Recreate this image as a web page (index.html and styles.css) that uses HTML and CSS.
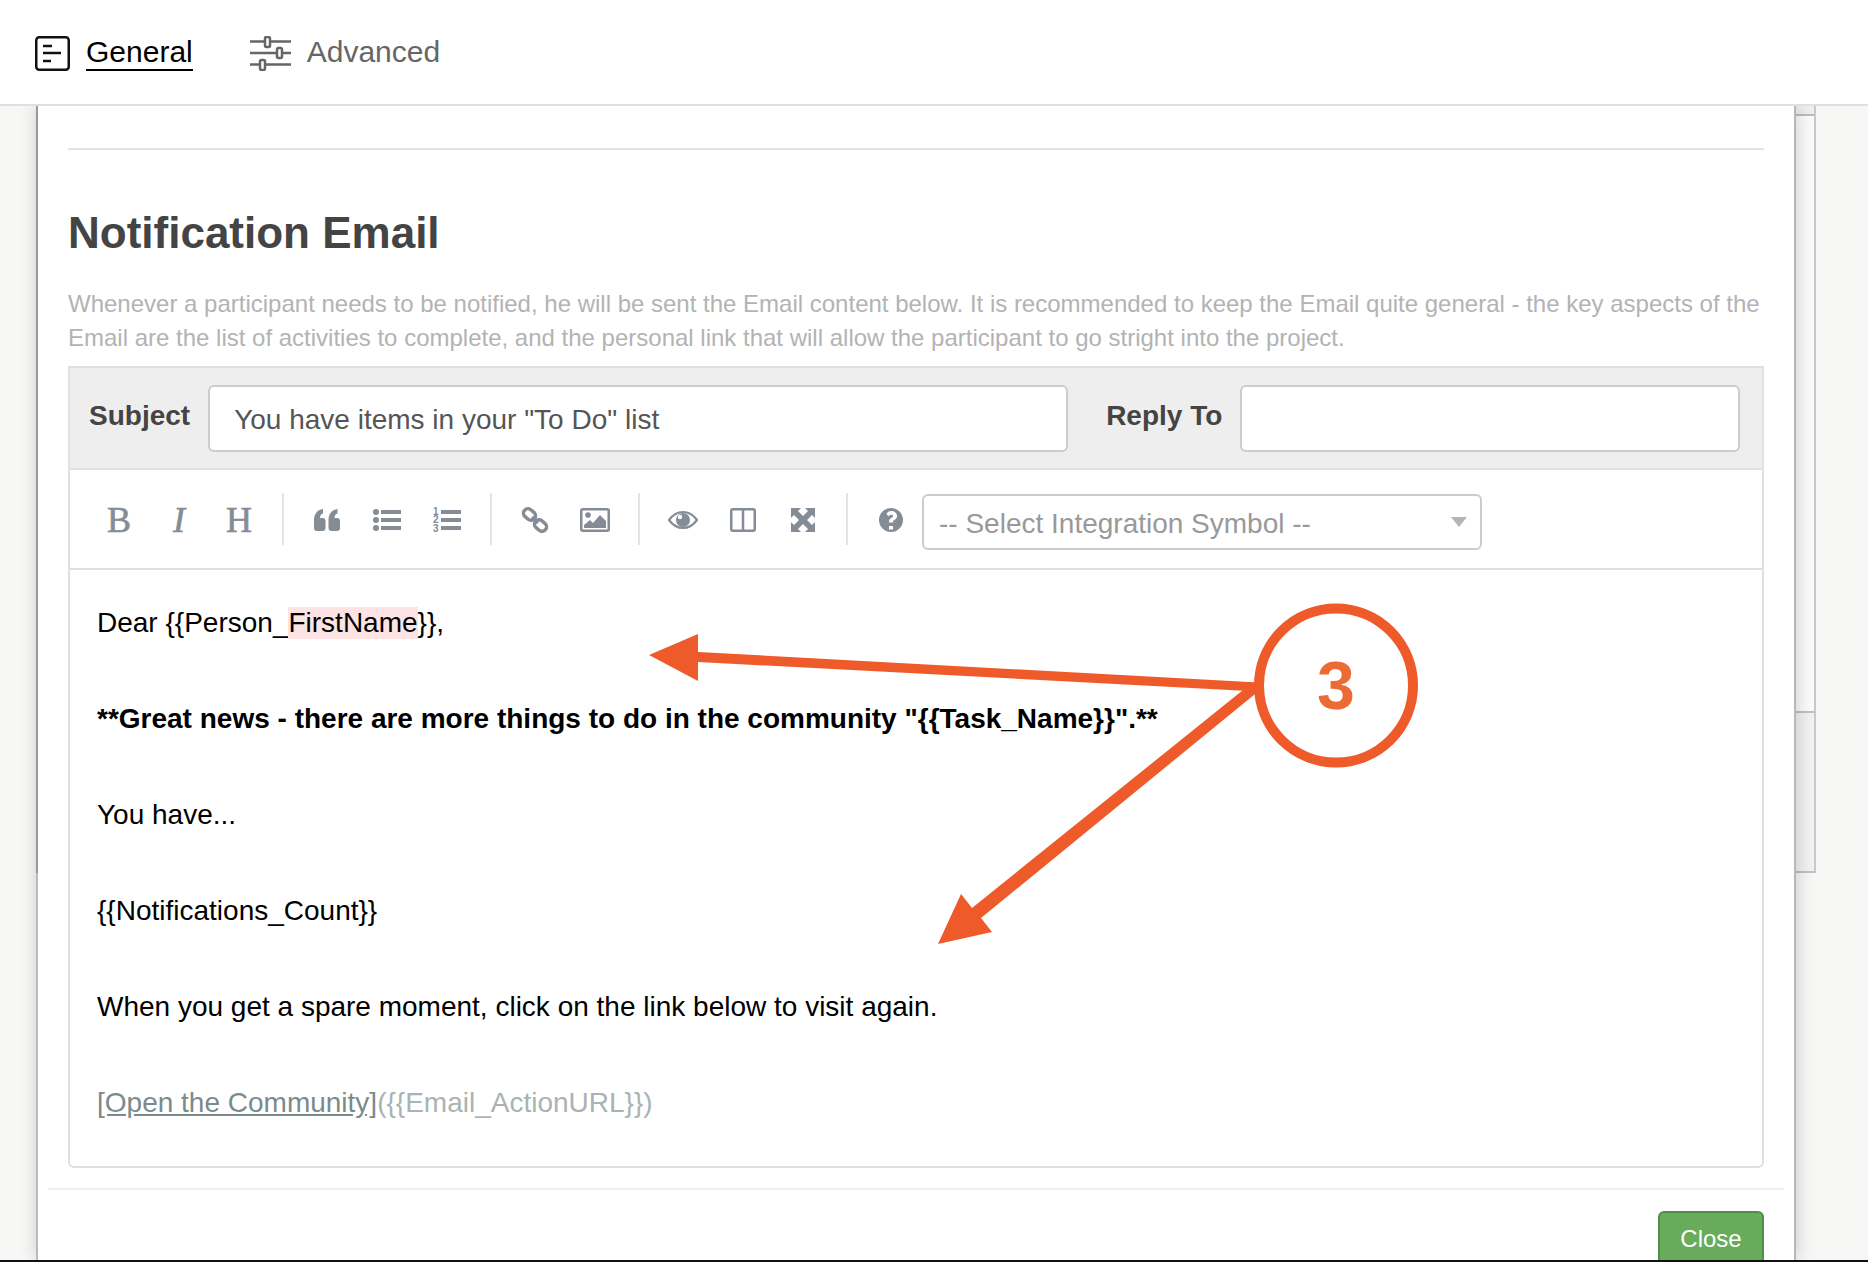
FILE: index.html
```html
<!DOCTYPE html>
<html lang="en">
<head>
<meta charset="utf-8">
<title>Notification Email</title>
<link rel="stylesheet" href="styles.css">
</head>
<body>
<div class="page">
  <header class="tabs">
    <a class="tab tab-active">
      <svg class="tab-icon" viewBox="0 0 35 35"><rect x="1.250" y="1.250" width="32.500" height="32.500" rx="3" fill="none" stroke="#111" stroke-width="2.500"/><path d="M8 10h9M8 17h18M8 25h8" stroke="#111" stroke-width="2.500" fill="none"/></svg>
      <span class="tab-label">General</span>
    </a>
    <a class="tab">
      <svg class="tab-icon tab-icon-wide" viewBox="0 0 41 35"><g stroke="#666" stroke-width="2.500" fill="#fff"><path d="M0 5.500h41M0 17h41M0 28.500h41" fill="none"/><rect x="15" y="1" width="5" height="10" rx="1.500"/><rect x="27" y="12" width="5" height="10" rx="1.500"/><rect x="10" y="24" width="5" height="10" rx="1.500"/></g></svg>
      <span class="tab-label">Advanced</span>
    </a>
  </header>

  <div class="stage">
    <div class="panel-edge"></div>
    <main class="panel">
      <hr class="rule">
      <h1 class="title">Notification Email</h1>
      <p class="desc">Whenever a participant needs to be notified, he will be sent the Email content below. It is recommended to keep the Email quite general - the key aspects of the Email are the list of activities to complete, and the personal link that will allow the participant to go stright into the project.</p>

      <section class="form-head">
        <label class="field-label">Subject</label>
        <div class="input input-subject">You have items in your "To Do" list</div>
        <label class="field-label label-reply">Reply To</label>
        <div class="input input-reply"></div>
      </section>

      <section class="editor">
        <div class="toolbar">
          <span class="tool tool-text tool-b">B</span>
          <span class="tool tool-text tool-i">I</span>
          <span class="tool tool-text tool-h">H</span>
          <i class="sep"></i>
          <span class="tool"><svg class="ico" viewBox="0 0 30 26"><path d="M2 13C2 7 5 3 11 2v4.500C9 7 8 8.500 8 11h2.500c2 0 3 1 3 3v7c0 2-1 3-3 3H5c-2 0-3-1-3-3zM16.500 13c0-6 3-10 9-11v4.500c-2 .5-3 2-3 4.500H25c2 0 3 1 3 3v7c0 2-1 3-3 3h-5.500c-2 0-3-1-3-3z"/></svg></span>
          <span class="tool"><svg class="ico" viewBox="0 0 30 26"><circle cx="4" cy="5" r="3"/><circle cx="4" cy="13" r="3"/><circle cx="4" cy="21" r="3"/><rect x="9" y="3" width="20" height="4"/><rect x="9" y="11" width="20" height="4"/><rect x="9" y="19" width="20" height="4"/></svg></span>
          <span class="tool"><svg class="ico" viewBox="0 0 30 26"><text class="ol-num" x="1" y="8">1</text><text class="ol-num" x="1" y="16">2</text><text class="ol-num" x="1" y="25">3</text><rect x="9" y="3" width="20" height="4"/><rect x="9" y="11" width="20" height="4"/><rect x="9" y="19" width="20" height="4"/></svg></span>
          <i class="sep"></i>
          <span class="tool"><svg class="ico" viewBox="0 0 28 26"><g fill="none" stroke="#848c96" stroke-width="3.500"><rect x="2" y="3" width="13" height="9" rx="4.500" transform="rotate(40 8.500 7.500)"/><rect x="13" y="14" width="13" height="9" rx="4.500" transform="rotate(40 19.500 18.500)"/><path d="M11 10l6 6"/></g></svg></span>
          <span class="tool"><svg class="ico" viewBox="0 0 30 26"><rect x="1.250" y="2.250" width="27.500" height="21.500" rx="1.500" fill="none" stroke="#848c96" stroke-width="2.500"/><circle cx="8" cy="8" r="2.800"/><path d="M4 21v-3l6-5 3 3 7-8 6 6v7z"/></svg></span>
          <i class="sep"></i>
          <span class="tool"><svg class="ico" viewBox="0 0 30 26"><path d="M1 13C5 7.500 10 5 15 5s10 2.500 14 8c-4 5.500-9 8-14 8S5 18.500 1 13z" fill="none" stroke="#848c96" stroke-width="2.200"/><circle cx="15" cy="13" r="7"/><circle cx="12" cy="10" r="2.200" fill="#fff"/></svg></span>
          <span class="tool"><svg class="ico" viewBox="0 0 30 26"><rect x="3.250" y="2.250" width="23.500" height="21.500" rx="1.500" fill="none" stroke="#848c96" stroke-width="2.500"/><path d="M15 2v22" stroke="#848c96" stroke-width="2.500"/></svg></span>
          <span class="tool"><svg class="ico" viewBox="0 0 30 26"><path d="M3 1h10l-3 3 5 5 5-5-3-3h10v10l-3-3-5 5 5 5 3-3v10H17l3-3-5-5-5 5 3 3H3V15l3 3 5-5-5-5-3 3z"/></svg></span>
          <i class="sep"></i>
          <span class="tool"><svg class="ico" viewBox="0 0 30 26"><path fill-rule="evenodd" d="M15 1a12 12 0 1 0 0 24 12 12 0 0 0 0-24zm-2 18h4v3.500h-4zM15 4c3.500 0 6 2 6 5 0 2-1 3-3 4.200-.8.5-1 .8-1 2.300h-4c0-2.500.5-3.500 2.300-4.600 1.200-.7 1.700-1.200 1.700-1.900 0-.8-.8-1.300-1.900-1.300s-1.900.6-2.600 1.600L10.500 7C11.500 5 13 4 15 4z"/></svg></span>
          <div class="select">
            <span class="select-text">-- Select Integration Symbol --</span>
            <i class="caret"></i>
          </div>
        </div>
        <div class="content">
          <p class="line">Dear {{Person_<span class="hl">FirstName</span>}},</p>
          <p class="line"></p>
          <p class="line line-bold">**Great news - there are more things to do in the community "{{Task_Name}}".**</p>
          <p class="line"></p>
          <p class="line">You have...</p>
          <p class="line"></p>
          <p class="line">{{Notifications_Count}}</p>
          <p class="line"></p>
          <p class="line">When you get a spare moment, click on the link below to visit again.</p>
          <p class="line"></p>
          <p class="line"><span class="link-text">[Open the Community]</span><span class="link-url">({{Email_ActionURL}})</span></p>
        </div>
      </section>

      <footer class="foot">
        <button class="btn-close">Close</button>
      </footer>
    </main>
    <div class="scroll-track">
      <div class="scroll-cap"></div>
      <div class="scroll-upper"></div>
      <div class="scroll-thumb"></div>
    </div>
  </div>
  <div class="bottom-edge"></div>

  <svg class="annot" viewBox="0 0 1868 1262">
    <g fill="#ee5a2a">
      <path d="M1258 682.500L698 652V634L649 655L698 681V662L1258 691.500z"/>
      <path d="M1260 690L1253 682L972 908L961 894L938 944L992 932L981 918z"/>
    </g>
    <circle cx="1336" cy="685.500" r="77" fill="#fff" stroke="#ee5a2a" stroke-width="10"/>
    <text class="annot-num" x="1336" y="709">3</text>
  </svg>
</div>
</body>
</html>
```

FILE: styles.css
```css
* { box-sizing: border-box; }
html, body { margin: 0; padding: 0; }
body {
  width: 1868px;
  height: 1262px;
  overflow: hidden;
  font-family: "Liberation Sans", Arial, sans-serif;
  background: #f7f7f5;
}
.page { position: relative; width: 1868px; height: 1262px; display: flex; flex-direction: column; overflow: hidden; }

/* top tabs */
.tabs {
  position: relative;
  z-index: 2;
  height: 106px;
  flex: none;
  background: #fff;
  border-bottom: 2px solid #e0e0e0;
  display: flex;
  align-items: center;
  padding: 0 0 0 35px;
  gap: 57px;
}
.tab { display: flex; align-items: center; gap: 16px; color: #666; }
.tab-icon { width: 35px; height: 35px; display: block; margin-top: 2px; }
.tab-icon-wide { width: 41px; }
.tab-label { font-size: 30px; line-height: 36px; }
.tab-active { color: #000; }
.tab-active .tab-label { border-bottom: 2px solid #000; line-height: 34px; margin-top: 2px; }

/* stage */
.stage { flex: 1; display: flex; min-height: 0; padding-left: 36px; }
.panel-edge {
  position: relative;
  z-index: 1;
  width: 2px;
  flex: none;
  background: linear-gradient(180deg, #999 0, #999 767px, #bbb 767px);
}
.panel {
  position: relative;
  width: 1758px;
  flex: none;
  background: #fff;
  border-right: 2px solid #b8b8b8;
  box-shadow: 0 0 18px rgba(0, 0, 0, .2);
  padding: 42px 30px 0;
  overflow: hidden;
}
.rule { margin: 0; border: 0; height: 2px; background: #e3e3e3; }
.title { margin: 58px 0 0; font-size: 44px; line-height: 50px; font-weight: 700; color: #444; }
.desc { margin: 29px 0 0; font-size: 24px; line-height: 33.500px; color: #b3b3b3; }

/* subject */
.form-head {
  margin-top: 12px;
  height: 104px;
  background: #eee;
  border: 2px solid #e0e0e0;
  display: flex;
  align-items: center;
  padding: 0 22px 0 19px;
}
.field-label { font-size: 28px; font-weight: 700; color: #444; line-height: 32px; margin-top: -4px; }
.input {
  height: 67px;
  background: #fff;
  border: 2px solid #ccc;
  border-radius: 6px;
  font-size: 28px;
  line-height: 65px;
  color: #555;
  padding-left: 24px;
}
.input-subject { width: 860px; margin-left: 18px; }
.label-reply { margin-left: 38px; }
.input-reply { flex: 1; margin-left: 18px; }

/* editor */
.editor {
  border: 2px solid #e0e0e0;
  border-top: 0;
  border-radius: 0 0 6px 6px;
  height: 698px;
}
.toolbar {
  height: 100px;
  border-bottom: 2px solid #e0e0e0;
  display: flex;
  align-items: center;
  padding-left: 19px;
}
.tool { width: 60px; flex: none; display: flex; justify-content: center; align-items: center; height: 40px; color: #848c96; margin-top: 2px; }
.tool-text { font-family: "Liberation Serif", serif; font-size: 36px; line-height: 40px; -webkit-text-stroke: .6px #848c96; }
.tool-i { font-style: italic; }
.ico { width: 30px; height: 26px; display: block; fill: #848c96; }
.ol-num { font-family: "Liberation Sans", sans-serif; font-size: 10px; font-weight: 700; fill: #848c96; }
.sep { width: 2px; height: 52px; background: #e4e4e4; flex: none; margin: 0 13px; }
.select {
  width: 560px;
  height: 56px;
  margin: 5px 0 0 1px;
  flex: none;
  border: 2px solid #ccc;
  border-radius: 6px;
  display: flex;
  align-items: center;
  justify-content: space-between;
  padding: 0 13px 0 15px;
  font-size: 28px;
  color: #999;
}
.select-text { padding-top: 5px; }
.caret { width: 0; height: 0; border-left: 8px solid transparent; border-right: 8px solid transparent; border-top: 10px solid #b5b5b5; }
.content { padding: 29px 27px 0; }
.line { margin: 0; height: 48px; font-size: 28px; line-height: 48px; color: #000; }
.line-bold { font-weight: 700; }
.hl { background: #fde3e3; display: inline-block; line-height: 32px; }
.link-text { color: #7b8a8b; text-decoration: underline; }
.link-url { color: #aab3b4; }

/* footer */
.foot {
  margin: 20px -20px 0;
  border-top: 2px solid #eee;
  display: flex;
  justify-content: flex-end;
  padding: 21px 20px 0;
}
.btn-close {
  width: 106px;
  height: 60px;
  background: #67ab5b;
  border: 2px solid #4f8f47;
  border-radius: 6px;
  color: #fff;
  font-family: "Liberation Sans", sans-serif;
  font-size: 24px;
  padding: 0 0 4px;
}

/* scroll strip */
.scroll-track { width: 20px; height: 767px; flex: none; display: flex; flex-direction: column; border-right: 2px solid #c8c8c8; background: #fbfbfb; }
.scroll-cap { height: 10px; background: #eee; border-bottom: 2px solid #bbb; flex: none; }
.scroll-upper { height: 597px; flex: none; border-bottom: 2px solid #c0c0c0; }
.scroll-thumb { flex: 1; background: #f2f2f2; border-bottom: 2px solid #c0c0c0; }

.bottom-edge { position: relative; z-index: 2; height: 2px; flex: none; background: #111; }

/* annotation */
.annot { position: absolute; z-index: 3; left: 0; top: 0; width: 1868px; height: 1262px; pointer-events: none; }
.annot-num { font-family: "Liberation Sans", sans-serif; font-size: 68px; font-weight: 700; fill: #ec6a33; text-anchor: middle; }
```
